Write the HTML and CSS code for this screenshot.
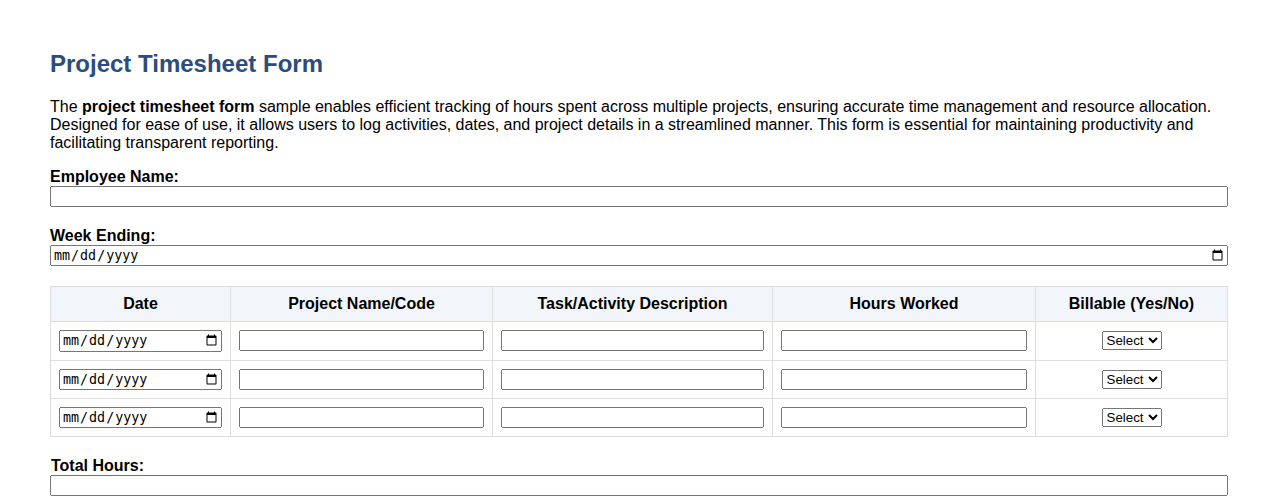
FILE: index.html
```
<!DOCTYPE html>
<html>
<head>
  <title>Project Timesheet Form</title>
  <link rel="stylesheet" href="styles.css">
</head>
<body>
  <div class="container">
    <h1>Project Timesheet Form</h1>
    <p class="intro">The <strong>project timesheet form</strong> sample enables efficient tracking of hours spent across multiple projects, ensuring accurate time management and resource allocation. Designed for ease of use, it allows users to log activities, dates, and project details in a streamlined manner. This form is essential for maintaining productivity and facilitating transparent reporting.</p>

    <form>
      <div class="form-group">
        <label for="employee-name">Employee Name:</label>
        <input type="text" id="employee-name">
      </div>

      <div class="form-group">
        <label for="week-ending">Week Ending:</label>
        <input type="date" id="week-ending">
      </div>

      <table class="timesheet">
        <colgroup>
          <col class="col-date">
          <col class="col-project">
          <col class="col-task">
          <col class="col-hours">
          <col class="col-billable">
        </colgroup>
        <thead>
          <tr>
            <th>Date</th>
            <th>Project Name/Code</th>
            <th>Task/Activity Description</th>
            <th>Hours Worked</th>
            <th>Billable (Yes/No)</th>
          </tr>
        </thead>
        <tbody>
          <tr>
            <td><input type="date"></td>
            <td><input type="text"></td>
            <td><input type="text"></td>
            <td><input type="text"></td>
            <td class="center">
              <select>
                <option>Select</option>
                <option>Yes</option>
                <option>No</option>
              </select>
            </td>
          </tr>
          <tr>
            <td><input type="date"></td>
            <td><input type="text"></td>
            <td><input type="text"></td>
            <td><input type="text"></td>
            <td class="center">
              <select>
                <option>Select</option>
                <option>Yes</option>
                <option>No</option>
              </select>
            </td>
          </tr>
          <tr>
            <td><input type="date"></td>
            <td><input type="text"></td>
            <td><input type="text"></td>
            <td><input type="text"></td>
            <td class="center">
              <select>
                <option>Select</option>
                <option>Yes</option>
                <option>No</option>
              </select>
            </td>
          </tr>
        </tbody>
      </table>

      <div class="form-group total">
        <label for="total-hours">Total Hours:</label>
        <input type="text" id="total-hours">
      </div>
    </form>
  </div>
</body>
</html>
```

FILE: styles.css
```
body {
  font-family: "Liberation Sans", Arial, sans-serif;
  font-size: 16px;
  color: #000;
  background-color: #fff;
  margin: 0;
}

.container {
  padding: 50px 50px 0 50px;
}

h1 {
  font-size: 24px;
  line-height: 28px;
  color: #2b4c7e;
  margin: 0 0 20px 0;
}

.intro {
  margin: 0 0 16px 0;
  line-height: 18px;
}

.form-group {
  margin-bottom: 20px;
}

label {
  display: block;
  font-weight: bold;
  line-height: 18px;
}

input[type="text"],
input[type="date"] {
  width: 100%;
  box-sizing: border-box;
  margin: 0;
}

.timesheet {
  width: 100%;
  border-collapse: collapse;
  margin-bottom: 20px;
}

.timesheet th,
.timesheet td {
  border: 1px solid #dddddd;
  padding: 8px;
}

.timesheet th {
  background-color: #f2f5f9;
  font-weight: bold;
  text-align: center;
  line-height: 18px;
}

.timesheet td {
  line-height: 0;
}

.center {
  text-align: center;
}

.col-date { width: 180px; }
.col-project { width: 262px; }
.col-task { width: 280px; }
.col-hours { width: 263px; }
.col-billable { width: 192px; }

.total label {
  padding-left: 1px;
}
```
